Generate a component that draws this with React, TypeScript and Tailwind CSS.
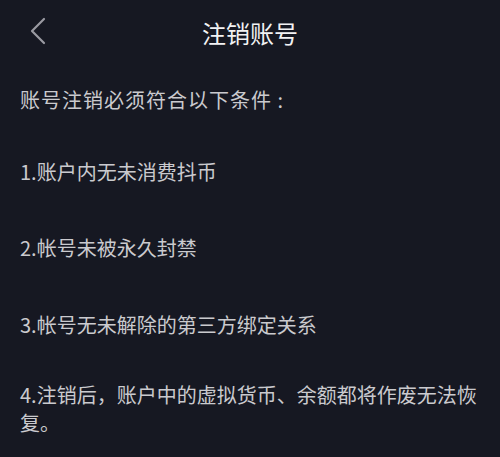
import React from 'react';

const items = [
  { text: '1.账户内无未消费抖币', mt: 'mt-[44px]' },
  { text: '2.帐号未被永久封禁', mt: 'mt-[48px]' },
  { text: '3.帐号无未解除的第三方绑定关系', mt: 'mt-[49px]' },
  { text: '4.注销后，账户中的虚拟货币、余额都将作废无法恢复。', mt: 'mt-[42px]' },
];

export default function App() {
  return (
    <div
      className="w-[500px] h-[457px] bg-[#161822] overflow-hidden"
      style={{ fontFamily: '"Noto Sans CJK SC", "Noto Sans", sans-serif' }}
    >
      <div className="relative h-[66px] flex items-center justify-center">
        <button className="absolute left-[28px] top-[16px] w-[20px] h-[30px] flex items-center justify-center">
          <svg width="18" height="28" viewBox="0 0 18 28" fill="none">
            <path d="M15 2 L3 14 L15 26" stroke="#9a9aa2" strokeWidth="2.2" strokeLinecap="round" strokeLinejoin="round" />
          </svg>
        </button>
        <h1 className="text-[24px] leading-[32px] text-[#f2f2f4] font-normal">注销账号</h1>
      </div>
      <div className="px-5 pt-5 text-[20px] leading-[28px] text-[#cacace]">
        <p className="tracking-[1px]">账号注销必须符合以下条件 :</p>
        {items.map(item => (
          <p key={item.text} className={item.mt}>
            {item.text}
          </p>
        ))}
      </div>
    </div>
  );
}
